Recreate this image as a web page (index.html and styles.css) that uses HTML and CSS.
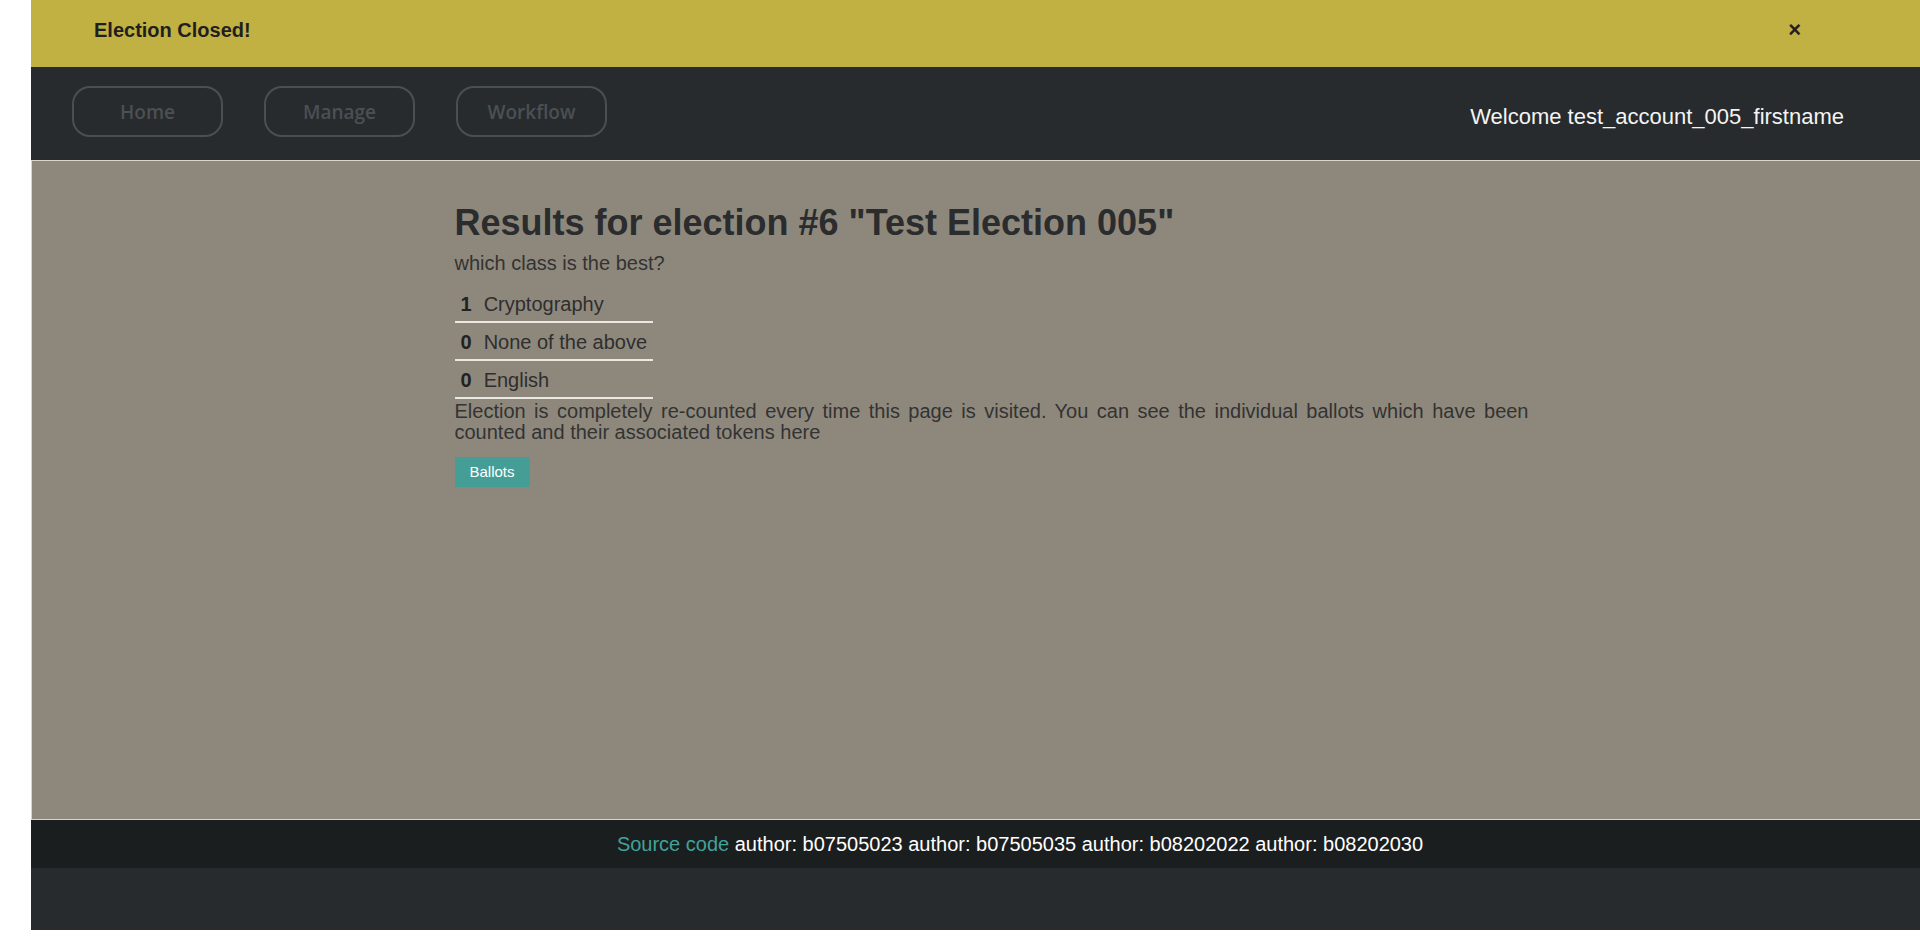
FILE: index.html
```html
<!DOCTYPE html>
<html lang="en">
<head>
<meta charset="utf-8">
<title>Results</title>
<link rel="stylesheet" href="styles.css">
</head>
<body>
<div class="page">
  <div class="alert">
    <strong class="alert-text">Election Closed!</strong>
    <span class="alert-close">&times;</span>
  </div>
  <nav class="nav">
    <div class="nav-buttons">
      <a class="nav-btn">Home</a>
      <a class="nav-btn">Manage</a>
      <a class="nav-btn">Workflow</a>
    </div>
    <div class="welcome">Welcome test_account_005_firstname</div>
  </nav>
  <main class="main">
    <div class="content">
      <h1 class="title">Results for election #6 "Test Election 005"</h1>
      <p class="question">which class is the best?</p>
      <table class="results">
        <tr><td class="count">1</td><td class="opt">Cryptography</td></tr>
        <tr><td class="count">0</td><td class="opt">None of the above</td></tr>
        <tr><td class="count">0</td><td class="opt">English</td></tr>
      </table>
      <p class="note">Election is completely re-counted every time this page is visited. You can see the individual ballots which have been counted and their associated tokens here</p>
      <a class="ballots">Ballots</a>
    </div>
  </main>
  <footer class="footer"><a class="src">Source code</a> author: b07505023 author: b07505035 author: b08202022 author: b08202030</footer>
  <div class="filler"></div>
</div>
</body>
</html>
```
FILE: styles.css
```css
html, body {
  margin: 0;
  padding: 0;
  background: #ffffff;
  overflow: hidden;
}
body {
  font-family: "Liberation Sans", Arial, sans-serif;
  font-size: 20px;
  color: #2e2e2e;
}
.page {
  margin-left: 31px;
  width: 1920px;
}
.alert {
  height: 67px;
  box-sizing: border-box;
  background: #c1b042;
  display: flex;
  justify-content: space-between;
  align-items: flex-start;
  padding: 18px 150px 0 63px;
  color: #1f1f1f;
}
.alert-text {
  font-size: 20px;
  line-height: 24px;
  font-weight: bold;
}
.alert-close {
  font-size: 22px;
  line-height: 24px;
  font-weight: bold;
}
.nav {
  height: 93px;
  box-sizing: border-box;
  background: #272b2e;
  display: flex;
  justify-content: space-between;
  align-items: flex-start;
  padding: 19px 107px 0 41px;
}
.nav-buttons {
  display: flex;
  gap: 41px;
}
.nav-btn {
  width: 151px;
  height: 51px;
  box-sizing: border-box;
  border: 2px solid #4a4f53;
  border-radius: 18px;
  display: flex;
  align-items: center;
  justify-content: center;
  font-family: "Open Sans", "Noto Sans", sans-serif;
  font-weight: 600;
  font-size: 19px;
  color: #4b5054;
}
.welcome {
  margin-top: 18px;
  font-size: 22px;
  line-height: 26px;
  color: #f4f4f4;
}
.main {
  height: 660px;
  box-sizing: border-box;
  background: #8e887c;
  border: 1px solid #d9d4cc;
  border-right: none;
}
.content {
  width: 1074px;
  margin: 0 auto;
  padding-top: 40px;
}
.title {
  margin: 0 0 7px;
  font-size: 36px;
  line-height: 43px;
  font-weight: bold;
  color: #2a2c2e;
}
.question {
  margin: 0 0 10px;
  line-height: 24px;
  color: #333333;
}
.results {
  border-collapse: collapse;
}
.results td {
  padding: 7px 6px 5px;
  line-height: 24px;
  border-bottom: 2px solid #ebe8e2;
}
.count {
  font-weight: bold;
  color: #222222;
}
.opt {
  color: #2e2e2e;
}
.note {
  margin: 2px 0 0;
  line-height: 21px;
  text-align: justify;
  color: #333333;
}
.ballots {
  display: inline-block;
  margin-top: 14px;
  width: 75px;
  height: 30px;
  box-sizing: border-box;
  background: #449e96;
  color: #ffffff;
  font-size: 15px;
  line-height: 30px;
  text-align: center;
}
.footer {
  height: 48px;
  box-sizing: border-box;
  background: #1b1e1f;
  color: #ffffff;
  text-align: center;
  line-height: 30px;
  padding: 9px 0 0 58px;
}
.src {
  color: #3fa39a;
}
.filler {
  height: 62px;
  background: #272b2e;
}
```
